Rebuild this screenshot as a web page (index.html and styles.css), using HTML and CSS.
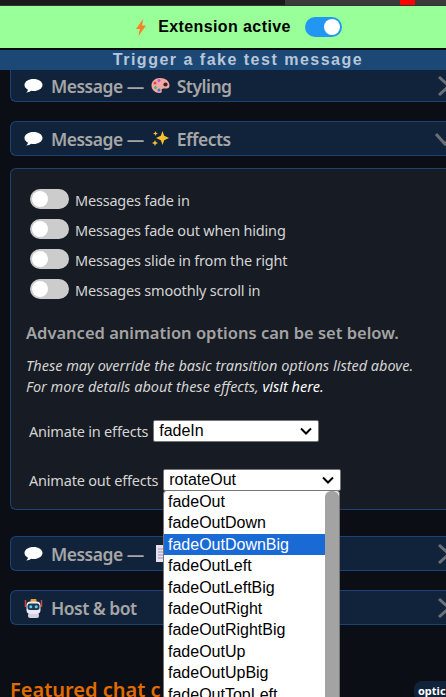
FILE: index.html
```html
<!DOCTYPE html>
<html lang="en">
<head>
  <meta charset="UTF-8" />
  <title>Extension options</title>
  <link rel="stylesheet" href="styles.css">
</head>
<body>

  <div class="browser-strip">
    <div class="strip-tab"></div>
    <div class="strip-field"><span class="strip-red"></span></div>
  </div>

  <div class="status-bar">
    <svg class="bolt" width="10" height="17" viewBox="0 0 10 17"><path d="M7 0 0 10h3.800L2.500 17 10 6.500H6.200z" fill="#f5822a"/></svg>
    <span class="status-text">Extension active</span>
    <span class="switch switch-on"></span>
  </div>

  <div class="test-bar">Trigger a fake test message</div>

  <div class="content">

    <div class="section section-cut">
      <svg class="emoji" width="19" height="17" viewBox="0 0 19 17"><path d="M9.500 2C4.500 2 .5 4.600.5 8c0 2 1.400 3.700 3.500 4.800-.2 1-.8 2-1.800 2.700 2 0 3.700-.7 4.800-1.700.8.200 1.600.2 2.500.2 5 0 9-2.600 9-6S14.500 2 9.500 2z" fill="#fff"/></svg>
      <span class="section-title">Message —</span>
      <svg class="emoji" width="19" height="17" viewBox="0 0 19 17"><path d="M9 1C4 1 .5 4.300.5 8.500S4 16 8.500 16c2 0 2.500-1 2.200-2.300-.3-1.400.5-2.200 2-2.200h2.800c2 0 3-1.300 3-3C18.500 4 14.500 1 9 1z" fill="#f4a6a0"/><circle cx="14.500" cy="7.500" r="2.100" fill="#2b2b2b"/><circle cx="8" cy="3.500" r="1.500" fill="#b05fd0"/><circle cx="4" cy="6" r="1.500" fill="#e0405a"/><circle cx="4.500" cy="10.500" r="1.500" fill="#35c46a"/><circle cx="8" cy="13" r="1.500" fill="#3c6fe0"/></svg>
      <span class="section-title">Styling</span>
      <svg class="chevron" width="14" height="22" viewBox="0 0 14 22"><path d="M2 2l10 9-10 9" /></svg>
    </div>

    <div class="section">
      <svg class="emoji" width="19" height="17" viewBox="0 0 19 17"><path d="M9.500 2C4.500 2 .5 4.600.5 8c0 2 1.400 3.700 3.500 4.800-.2 1-.8 2-1.800 2.700 2 0 3.700-.7 4.800-1.700.8.200 1.600.2 2.500.2 5 0 9-2.600 9-6S14.500 2 9.500 2z" fill="#fff"/></svg>
      <span class="section-title">Message —</span>
      <svg class="emoji" width="19" height="17" viewBox="0 0 19 17"><path d="M11.500 1l1.700 4.800 4.800 2.200-4.800 2.200-1.700 4.800-1.700-4.800L5 8l4.800-2.200zM4 10l.9 2.100 2.100.9-2.100.9L4 16l-.9-2.100L1 13l2.100-.9zM4.500 1l.7 1.800L7 3.500l-1.800.7-.7 1.800-.7-1.800L2 3.500l1.800-.7z" fill="#f6c02c"/></svg>
      <span class="section-title">Effects</span>
      <svg class="chevron chevron-open" width="22" height="14" viewBox="0 0 22 14"><path d="M2 2l9 10 9-10" /></svg>
    </div>

    <div class="panel">
      <div class="toggle-list">
        <label class="toggle-row"><span class="switch"></span>Messages fade in</label>
        <label class="toggle-row"><span class="switch"></span>Messages fade out when hiding</label>
        <label class="toggle-row"><span class="switch"></span>Messages slide in from the right</label>
        <label class="toggle-row"><span class="switch"></span>Messages smoothly scroll in</label>
      </div>

      <h3 class="panel-heading">Advanced animation options can be set below.</h3>
      <p class="panel-note">These may override the basic transition options listed above.<br>For more details about these effects, <a href="#">visit here.</a></p>

      <div class="select-row">
        <span>Animate in effects</span>
        <div class="fake-select select-in">fadeIn<svg width="12" height="8" viewBox="0 0 12 8"><path d="M1 1.500l5 5 5-5"/></svg></div>
      </div>

      <div class="select-row select-row-out">
        <span>Animate out effects</span>
        <div class="fake-select select-out">rotateOut<svg width="12" height="8" viewBox="0 0 12 8"><path d="M1 1.500l5 5 5-5"/></svg></div>
      </div>

      <div class="dropdown">
        <ul class="dropdown-list">
          <li>fadeOut</li>
          <li>fadeOutDown</li>
          <li class="selected">fadeOutDownBig</li>
          <li>fadeOutLeft</li>
          <li>fadeOutLeftBig</li>
          <li>fadeOutRight</li>
          <li>fadeOutRightBig</li>
          <li>fadeOutUp</li>
          <li>fadeOutUpBig</li>
          <li>fadeOutTopLeft</li>
        </ul>
        <div class="dropdown-scroll"></div>
      </div>
    </div>

    <div class="section section-lower">
      <svg class="emoji" width="19" height="17" viewBox="0 0 19 17"><path d="M9.500 2C4.500 2 .5 4.600.5 8c0 2 1.400 3.700 3.500 4.800-.2 1-.8 2-1.800 2.700 2 0 3.700-.7 4.800-1.700.8.200 1.600.2 2.500.2 5 0 9-2.600 9-6S14.500 2 9.500 2z" fill="#fff"/></svg>
      <span class="section-title">Message —</span>
      <svg class="emoji" width="19" height="17" viewBox="0 0 19 17"><path d="M5 0h10v17H5z" fill="#e6e0f0"/><path d="M7 4h6M7 7h6M7 10h6M7 13h6" stroke="#9a94a8" fill="none"/></svg>
      <svg class="chevron" width="14" height="22" viewBox="0 0 14 22"><path d="M2 2l10 9-10 9" /></svg>
    </div>

    <div class="section">
      <svg class="emoji" width="19" height="20" viewBox="0 0 19 20"><path d="M1.500 2v7M17.500 2v7" stroke="#d8403c" stroke-width="1.500" fill="none"/><rect x="6.500" y="1" width="6" height="3" rx="1" fill="#f0a030"/><rect x="4" y="15" width="11" height="5" rx="2" fill="#d8d2de"/><rect x="2.500" y="3.500" width="14" height="12.500" rx="4" fill="#eceaf0"/><rect x="3.500" y="5.500" width="12" height="6.500" rx="2.500" fill="#1d3a52"/><circle cx="6.800" cy="8.700" r="1.500" fill="#5fd4ee"/><circle cx="12.200" cy="8.700" r="1.500" fill="#5fd4ee"/></svg>
      <span class="section-title">Host &amp; bot</span>
      <svg class="chevron" width="14" height="22" viewBox="0 0 14 22"><path d="M2 2l10 9-10 9" /></svg>
    </div>

    <div class="featured-row">
      <h2 class="featured-title">Featured chat c</h2>
      <span class="options-badge">optic</span>
    </div>

  </div>

</body>
</html>
```

FILE: styles.css
```css
html, body {
  margin: 0;
  padding: 0;
  height: 697px;
  overflow: hidden;
}
body {
  font-family: "Noto Sans", "Open Sans", sans-serif;
  background-color: #0b0e14;
  color: #d4d4d4;
}
.browser-strip {
  display: flex;
  height: 5px;
  background: #1a1a1a;
  border-bottom: 1px solid #333;
}
.strip-tab {
  width: 285px;
}
.strip-field {
  flex: 1;
  background: #3a3a3a;
  padding-left: 115px;
}
.strip-red {
  display: block;
  width: 15px;
  height: 5px;
  background: #f00;
}
.status-bar {
  display: flex;
  justify-content: center;
  align-items: center;
  height: 42px;
  padding-left: 32px;
  background: #99ff99;
  border-bottom: 2px solid #0c0c0c;
  font-family: "Liberation Sans", Arial, sans-serif;
}
.bolt {
  margin-right: 12px;
}
.status-text {
  font-size: 16px;
  font-weight: bold;
  color: #000;
  letter-spacing: 0.4px;
  margin-right: 14px;
}
.switch {
  display: block;
  position: relative;
  flex: none;
  width: 39px;
  height: 20px;
  border-radius: 10px;
  background: #ccc;
}
.switch::before {
  content: "";
  position: absolute;
  left: 2px;
  top: 2px;
  width: 16px;
  height: 16px;
  border-radius: 50%;
  background: #fff;
}
.switch-on {
  width: 37px;
  background: #2196f3;
}
.switch-on::before {
  left: 19px;
}
.test-bar {
  height: 20px;
  line-height: 20px;
  padding-left: 30px;
  text-align: center;
  background: #1c4876;
  color: #b8c6d8;
  font-family: "Liberation Sans", Arial, sans-serif;
  font-size: 16px;
  font-weight: bold;
  letter-spacing: 1.500px;
}
.content {
  width: 436px;
  margin-left: 10px;
}
.section {
  display: flex;
  align-items: center;
  height: 33px;
  overflow: hidden;
  padding-left: 13px;
  margin-top: 19px;
  background: #11233b;
  border: 1px solid #1b4377;
  border-right: none;
  border-radius: 6px 0 0 6px;
  font-size: 17.500px;
  font-weight: 600;
  color: #a6a6a6;
}
.section-cut {
  margin-top: 0;
  height: 31px;
  border-top: none;
  border-radius: 0 0 0 6px;
}
.section-lower {
  margin-top: 26px;
}
.emoji {
  flex: none;
  margin-right: 8px;
}
.section-title + .emoji {
  margin-right: 7px;
}
.section-title {
  margin-right: 7px;
  letter-spacing: -0.5px;
}
.chevron {
  flex: none;
  margin-left: auto;
  margin-right: -5px;
  fill: none;
  stroke: #6b6f75;
  stroke-width: 3;
}
.chevron-open {
  margin-right: -10px;
}
.panel {
  position: relative;
  height: 342px;
  margin-top: 12px;
  box-sizing: border-box;
  padding: 20px 0 0 19px;
  background: #171b23;
  border: 1px solid #1b4377;
  border-right: none;
  border-radius: 6px 0 0 6px;
  font-size: 14.500px;
  letter-spacing: -0.2px;
}
.toggle-list {
  display: flex;
  flex-direction: column;
  gap: 10px;
}
.toggle-row {
  display: flex;
  align-items: flex-start;
  gap: 6px;
  height: 20px;
  line-height: 22px;
}
.panel-heading {
  margin: 22px 0 0 -4px;
  font-size: 16.500px;
  font-weight: 600;
  letter-spacing: 0;
  color: #a3a3a3;
}
.panel-note {
  margin: 11px 0 0 -4px;
  font-size: 14.500px;
  font-style: italic;
  letter-spacing: 0;
  line-height: 21px;
}
.panel-note a {
  color: #fff;
  text-decoration: none;
}
.select-row {
  display: flex;
  align-items: center;
  gap: 5px;
  margin: 23px 0 0 -1px;
  height: 22px;
}
.select-row-out {
  margin-top: 27px;
}
.fake-select {
  display: flex;
  justify-content: space-between;
  align-items: center;
  box-sizing: border-box;
  height: 22px;
  padding: 0 6px 0 5px;
  background: #fff;
  border: 1px solid #767676;
  border-radius: 2px;
  color: #000;
  font-family: "Liberation Sans", Arial, sans-serif;
  font-size: 16px;
  letter-spacing: 0;
}
.fake-select svg {
  fill: none;
  stroke: #000;
  stroke-width: 2;
}
.select-in {
  width: 166px;
}
.select-out {
  width: 178px;
}
.dropdown {
  position: absolute;
  left: 152px;
  top: 321px;
  display: flex;
  width: 177px;
  height: 210px;
  overflow: hidden;
  box-sizing: border-box;
  background: #fff;
  border: 1px solid #767676;
  border-radius: 4px;
  color: #000;
  font-family: "Liberation Sans", Arial, sans-serif;
  font-size: 16px;
  letter-spacing: 0;
  z-index: 2;
}
.dropdown-list {
  flex: 1;
  margin: 0;
  padding: 0;
  list-style: none;
}
.dropdown-list li {
  height: 21.400px;
  line-height: 21px;
  padding-left: 4px;
}
.dropdown-list .selected {
  background: #1a6ad6;
  color: #fff;
}
.dropdown-scroll {
  width: 14px;
  background: #a3a3a3;
  border-radius: 6px 6px 0 0;
}
.featured-row {
  display: flex;
  justify-content: space-between;
  margin-top: 51px;
}
.featured-title {
  margin: 0;
  font-size: 20px;
  font-weight: 600;
  color: #e06c00;
  white-space: nowrap;
}
.options-badge {
  position: absolute;
  left: 414px;
  top: 681px;
  padding: 0 0 0 4px;
  width: 28px;
  height: 20px;
  line-height: 20px;
  background: #11233b;
  border-radius: 8px 0 0 8px;
  color: #fff;
  font-size: 11px;
  font-weight: bold;
}
```
